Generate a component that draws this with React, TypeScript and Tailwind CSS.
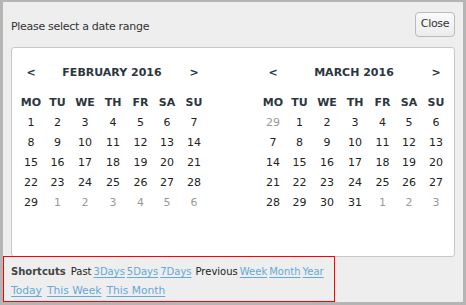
import clsx from "clsx";

type Day = { n: number; muted?: boolean };

const DAY_NAMES = ["MO", "TU", "WE", "TH", "FR", "SA", "SU"];

const build = (lead: number[], count: number, trail: number): Day[] => [
  ...lead.map((n) => ({ n, muted: true })),
  ...Array.from({ length: count }, (_, i) => ({ n: i + 1 })),
  ...Array.from({ length: trail }, (_, i) => ({ n: i + 1, muted: true })),
];

const months = [
  { title: "FEBRUARY 2016", days: build([], 29, 6) },
  { title: "MARCH 2016", days: build([29], 31, 3) },
];

const Month = ({ title, days }: { title: string; days: Day[] }) => (
  <div className="grid grid-cols-[26px_27px_28px_28px_27px_26px_28px] grid-rows-[20px_10px] auto-rows-[20px] text-center items-center">
    <div className="font-bold text-[#2d3640]">&lt;</div>
    <div className="col-span-5 font-bold text-[#2d3640]">{title}</div>
    <div className="font-bold text-[#2d3640]">&gt;</div>
    <div className="col-span-7" />
    {DAY_NAMES.map((d) => (
      <div key={d} className="font-bold text-[#2d3640]">
        {d}
      </div>
    ))}
    {days.map((d, i) => (
      <div key={i} className={clsx(d.muted ? "text-[#999]" : "text-[#222]")}>
        {d.n}
      </div>
    ))}
  </div>
);

const Link = ({ children }: { children: React.ReactNode }) => (
  <a href="#" className="text-[#65a9d9] underline underline-offset-2">
    {children}
  </a>
);

export default function App() {
  return (
    <div className="w-[466px] h-[305px] bg-[#eeeeee] border-[#b5b5b5] border-[3px] border-t-2 font-['DejaVu_Sans',sans-serif] text-[11px] text-[#333] flex flex-col">
      <div className="flex items-center justify-between px-[8px] pt-[10px]">
        <span className="tracking-[-0.3px] pt-[5px]">Please select a date range</span>
        <button className="w-[40px] h-[25px] rounded-[4px] border border-[#bbb] bg-gradient-to-b from-[#fafafa] to-[#ececec] text-[11px] tracking-[-0.3px] text-[#333]">
          Close
        </button>
      </div>
      <div className="mx-[8px] mt-[10px] h-[210px] bg-white border border-[#c8c8c8] rounded-[3px] flex gap-[52px] pl-[6px] pt-[15px]">
        {months.map((m) => (
          <Month key={m.title} title={m.title} days={m.days} />
        ))}
      </div>
      <div className="-mt-px w-[332px] h-[46px] border border-[#ff0000] pl-[7px] pt-[5px] leading-[19px] text-[#222]">
        <div className="flex gap-[2px] text-[10px]">
          <span className="font-bold text-[#444] mr-[3px]">Shortcuts</span>
          <span>Past</span>
          <Link>3Days</Link>
          <Link>5Days</Link>
          <Link>7Days</Link>
          <span className="ml-[2px]">Previous</span>
          <Link>Week</Link>
          <Link>Month</Link>
          <Link>Year</Link>
        </div>
        <div className="flex gap-[5px] text-[10.7px]">
          <Link>Today</Link>
          <Link>This Week</Link>
          <Link>This Month</Link>
        </div>
      </div>
    </div>
  );
}
